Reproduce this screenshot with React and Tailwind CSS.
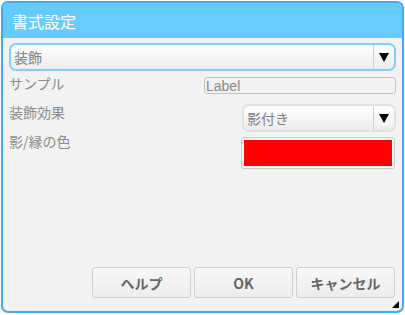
const font = "font-['Noto_Sans_CJK_JP','Liberation_Sans',sans-serif]";

function Arrow() {
    return (
        <div className="w-[21px] h-full flex items-center justify-center border-l border-[#cfcfcf]">
            <svg width="10" height="9" viewBox="0 0 10 9"><path d="M0 0H10L5 9Z" fill="#000" /></svg>
        </div>
    );
}

export default function App() {
    return (
        <div className={`w-[405px] h-[315px] bg-white p-[1px] ${font}`}>
            <div className="relative w-[403px] h-[312px] rounded-[7px] border-2 border-[#40aaf2] bg-[#f2f2f2] overflow-hidden flex flex-col">
                {/* Title */}
                <div className="h-[35px] bg-[#66ccff] flex items-center pl-[9px] text-white text-[16px] leading-none">
                    書式設定
                </div>

                <div className="flex flex-col px-[6px] pt-[5px]">
                    {/* Category combo */}
                    <div className="h-[28px] rounded-[7px] border-2 border-[#7fd0fa] bg-gradient-to-b from-white to-[#ececec] flex items-center">
                        <span className="flex-1 pl-[3px] text-[14px] text-[#808080] leading-none">装飾</span>
                        <Arrow />
                    </div>

                    {/* Sample */}
                    <div className="flex items-start justify-between mt-[6px] h-[17px]">
                        <span className="text-[14px] text-[#8c8c8c] leading-none mt-[-1px]">サンプル</span>
                        <div className="w-[192px] h-[17px] rounded-[3px] border border-[#c4c4c4] flex items-center pl-[1px] text-[14px] text-[#888] font-['Liberation_Sans',sans-serif] leading-none">
                            Label
                        </div>
                    </div>

                    {/* Effect */}
                    <div className="flex items-start justify-between mt-[10px]">
                        <span className="text-[14px] text-[#8c8c8c] leading-none mt-[1px]">装飾効果</span>
                        <div className="w-[154px] h-[28px] rounded-[7px] border-2 border-[#e0e0e0] bg-gradient-to-b from-white to-[#ececec] flex items-center">
                            <span className="flex-1 pl-[3px] text-[14px] text-[#808080] leading-none">影付き</span>
                            <Arrow />
                        </div>
                    </div>

                    {/* Color */}
                    <div className="flex items-start justify-between mt-[5px]">
                        <span className="text-[14px] text-[#8c8c8c] leading-none mt-[-3px]">影/縁の色</span>
                        <div className="w-[154px] h-[32px] rounded-[3px] border border-[#c8c8c8] bg-[#f8f8f8] p-[2px] mr-[1px]">
                            <div className="w-full h-full bg-[#ff0000]" />
                        </div>
                    </div>
                </div>

                {/* Buttons */}
                <div className="mt-auto mb-[13px] flex justify-end gap-[3px] pr-[7px]">
                    {["ヘルプ", "OK", "キャンセル"].map((label) => (
                        <button
                            key={label}
                            className="w-[99px] h-[31px] rounded-[3px] border border-[#cfcfcf] bg-gradient-to-b from-[#f8f8f8] to-[#ececec] text-[14px] font-bold text-[#666] leading-none"
                        >
                            {label}
                        </button>
                    ))}
                </div>

                {/* Resize grip */}
                <svg className="absolute right-[3px] bottom-[3px]" width="7" height="7" viewBox="0 0 7 7">
                    <path d="M7 0V7H0Z" fill="#000" />
                </svg>
            </div>
        </div>
    );
}
